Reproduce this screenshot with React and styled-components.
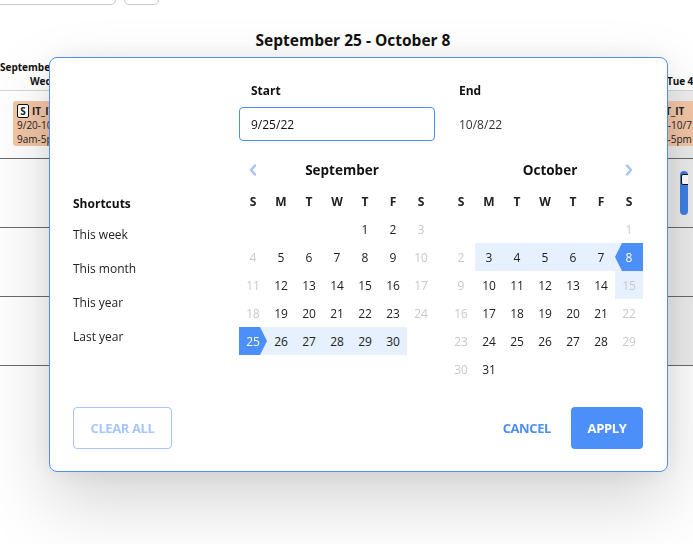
import React from 'react';
import styled, { createGlobalStyle, css } from 'styled-components';

const FONT = '"Open Sans", "Noto Sans", sans-serif';

const GlobalStyle = createGlobalStyle`
  html, body { margin: 0; padding: 0; background: #fff; overflow: hidden; }
  body { font-family: ${FONT}; color: #222; }
  #root { width: 693px; height: 544px; overflow: hidden; position: relative; }
  * { box-sizing: border-box; }
`;

/* ---------- background schedule page ---------- */
const Page = styled.div`
  width: 693px;
  height: 544px;
  overflow: hidden;
`;

const Toolbar = styled.div`
  display: flex;
  gap: 8px;
  height: 32px;
  margin-top: -27px;
  margin-left: -20px;
`;

const SearchBox = styled.div`
  width: 136px;
  border: 1px solid #c8c8c8;
  border-radius: 5px;
`;

const ToolButton = styled.div`
  width: 35px;
  border: 1px solid #c8c8c8;
  border-radius: 5px;
`;

const Title = styled.h1`
  margin: 24px 0 0;
  padding-left: 13px;
  text-align: center;
  font-size: 15.5px;
  line-height: 22px;
  font-weight: 700;
  color: #111;
`;

const MonthLabel = styled.div`
  margin-top: 9px;
  font-size: 10px;
  line-height: 14px;
  font-weight: 700;
  color: #111;
  white-space: nowrap;
`;

const ScheduleRow = styled.div`
  display: grid;
  grid-template-columns: 96px 536px 61px;
  height: ${p => p.$h}px;
  border-bottom: 1px solid ${p => (p.$light ? '#d4d4d4' : '#6a6a6a')};
`;

const DayName = styled.div`
  font-size: 10px;
  line-height: 14px;
  font-weight: 700;
  color: #111;
  white-space: nowrap;
  letter-spacing: -0.1px;
  padding-left: ${p => p.$pl}px;
`;

const Cell = styled.div`
  position: relative;
  min-width: 0;
  overflow: hidden;
  background: ${p => (p.$shade ? '#ededed' : 'transparent')};
`;

const EventCard = styled.div`
  margin: 10px 0 0 ${p => p.$ml}px;
  width: 82px;
  height: 45px;
  padding: 3px 4px 0;
  background: #f3c6a6;
  border-radius: 3px;
  font-size: 10px;
  line-height: 14px;
  color: #222;
  white-space: nowrap;
  overflow: hidden;
`;

const EventTitle = styled.div`
  display: flex;
  align-items: center;
  gap: 3px;
  font-weight: 700;
`;

const TypeBox = styled.span`
  display: inline-flex;
  align-items: center;
  justify-content: center;
  width: 12px;
  height: 14px;
  border: 1.5px solid #111;
  border-radius: 2px;
  font-size: 10px;
  font-weight: 700;
  line-height: 1;
  background: #fff;
`;

const Pill = styled.div`
  margin: 12px 0 0 48px;
  width: 8px;
  height: 44px;
  border-radius: 4px;
  background: #3f80e4;
  overflow: hidden;
  padding: 3px 0 0 1px;
`;

const PillMark = styled.div`
  width: 10px;
  height: 11px;
  border: 1.5px solid #111;
  border-radius: 2px;
  background: #fff;
`;

/* ---------- dialog ---------- */
const Dialog = styled.div`
  position: fixed;
  left: 49px;
  top: 57px;
  width: 619px;
  height: 415px;
  background: #fff;
  border: 1px solid #4d8ef7;
  border-radius: 8px;
  box-shadow: 0 30px 70px rgba(0, 0, 0, 0.17), 0 0 26px rgba(0, 0, 0, 0.07);
  padding: 24px 24px 21px 23px;
  display: flex;
  flex-direction: column;
`;

const Body = styled.div`
  display: flex;
`;

const Shortcuts = styled.div`
  width: 166px;
  flex: none;
  padding-top: 113px;
  display: flex;
  flex-direction: column;
  gap: 16px;
`;

const ShortcutsHeading = styled.div`
  font-size: 12px;
  line-height: 18px;
  font-weight: 700;
  color: #111;
  margin-bottom: -3px;
`;

const ShortcutItem = styled.div`
  font-size: 12px;
  line-height: 18px;
  color: #222;
`;

const Main = styled.div`
  width: 404px;
  flex: none;
`;

const Pair = styled.div`
  display: grid;
  grid-template-columns: 196px 196px;
  column-gap: 12px;
`;

const Field = styled.div`
  display: flex;
  flex-direction: column;
  gap: 7px;
`;

const FieldLabel = styled.label`
  padding-left: 12px;
  font-size: 12px;
  line-height: 18px;
  font-weight: 700;
  color: #111;
`;

const DateInput = styled.input`
  height: 34px;
  width: 100%;
  padding: 0 11px;
  border: 1px solid ${p => (p.$active ? '#4d8ef7' : 'transparent')};
  border-radius: 4px;
  outline: none;
  font-family: ${FONT};
  font-size: 12px;
  color: ${p => (p.$active ? '#111' : '#333')};
  background: #fff;
`;

const Calendars = styled(Pair)`
  margin-top: 15px;
`;

const MonthHeader = styled.div`
  display: flex;
  align-items: center;
  height: 28px;
`;

const NavButton = styled.div`
  width: 28px;
  height: 28px;
  flex: none;
  display: flex;
  align-items: center;
  justify-content: center;
`;

const MonthTitle = styled.div`
  flex: 1;
  padding-left: 10px;
  text-align: center;
  font-size: 13.5px;
  font-weight: 700;
  color: #111;
`;

const Grid = styled.div`
  display: grid;
  grid-template-columns: repeat(7, 28px);
  grid-auto-rows: 28px;
`;

const WeekGrid = styled(Grid)`
  margin-top: 3px;
`;

const Dow = styled.div`
  display: flex;
  align-items: center;
  justify-content: center;
  font-size: 12px;
  font-weight: 700;
  color: #222;
`;

const Day = styled.div`
  position: relative;
  display: flex;
  align-items: center;
  justify-content: center;
  font-size: 12px;
  color: ${p => (p.$edge ? '#fff' : p.$muted ? '#c8c8c8' : '#222')};
  background: ${p => (p.$range || p.$edge ? '#e6f0ff' : 'transparent')};
  ${p =>
    p.$edge &&
    css`
      &::before {
        content: '';
        position: absolute;
        inset: 0;
        background: #4d8ff8;
        clip-path: ${p.$edge === 'start'
          ? 'polygon(0 0, 75% 0, 100% 50%, 75% 100%, 0 100%)'
          : 'polygon(25% 0, 100% 0, 100% 100%, 25% 100%, 0 50%)'};
      }
    `}
  span {
    position: relative;
  }
`;

const Footer = styled.div`
  margin-top: 24px;
  display: flex;
  justify-content: space-between;
  align-items: center;
`;

const BaseButton = styled.button`
  height: 42px;
  border-radius: 4px;
  font-family: ${FONT};
  font-size: 13px;
  font-weight: 700;
  letter-spacing: -0.4px;
  text-transform: uppercase;
  cursor: pointer;
`;

const ClearButton = styled(BaseButton)`
  width: 99px;
  background: #fff;
  border: 1px solid #a8c6fb;
  color: #a8c6fb;
`;

const Actions = styled.div`
  display: flex;
  gap: 8px;
`;

const CancelButton = styled(BaseButton)`
  padding: 0 12px;
  background: transparent;
  border: none;
  color: #4d8ef7;
`;

const ApplyButton = styled(BaseButton)`
  width: 72px;
  background: #4d8ff8;
  border: none;
  color: #fff;
`;

const Chevron = ({ dir }) => (
  <svg width="10" height="12" viewBox="0 0 10 12">
    <path
      d={dir === 'left' ? 'M7 1.5 L3 6 L7 10.5' : 'M3 1.5 L7 6 L3 10.5'}
      fill="none"
      stroke="#a3c4fb"
      strokeWidth="2.4"
      strokeLinecap="round"
      strokeLinejoin="round"
    />
  </svg>
);

const DOW = ['S', 'M', 'T', 'W', 'T', 'F', 'S'];

function buildMonth(lead, days) {
  const cells = [];
  for (let i = 0; i < lead; i++) cells.push(null);
  for (let d = 1; d <= days; d++) cells.push(d);
  return cells;
}

const months = [
  {
    name: 'September',
    nav: 'left',
    cells: buildMonth(4, 30),
    range: [26, 27, 28, 29, 30],
    start: 25,
  },
  {
    name: 'October',
    nav: 'right',
    cells: buildMonth(6, 31),
    range: [3, 4, 5, 6, 7, 15],
    end: 8,
  },
];

function Month({ m }) {
  return (
    <div>
      <MonthHeader>
        <NavButton>{m.nav === 'left' && <Chevron dir="left" />}</NavButton>
        <MonthTitle>{m.name}</MonthTitle>
        <NavButton>{m.nav === 'right' && <Chevron dir="right" />}</NavButton>
      </MonthHeader>
      <WeekGrid>
        {DOW.map((d, i) => (
          <Dow key={i}>{d}</Dow>
        ))}
        {m.cells.map((d, i) => {
          if (d === null) return <Day key={i} />;
          const col = i % 7;
          const edge = d === m.start ? 'start' : d === m.end ? 'end' : undefined;
          return (
            <Day
              key={i}
              $edge={edge}
              $range={m.range.includes(d)}
              $muted={col === 0 || col === 6}
            >
              <span>{d}</span>
            </Day>
          );
        })}
      </WeekGrid>
    </div>
  );
}

const Event = ({ ml }) => (
  <EventCard $ml={ml}>
    <EventTitle>
      <TypeBox>S</TypeBox>IT_IT
    </EventTitle>
    <div>9/20-10/7</div>
    <div>9am-5pm</div>
  </EventCard>
);

export default function App() {
  return (
    <>
      <GlobalStyle />
      <Page>
        <Toolbar>
          <SearchBox />
          <ToolButton />
        </Toolbar>
        <Title>September 25 - October 8</Title>
        <MonthLabel>September</MonthLabel>
        <ScheduleRow $h={17} $light>
          <DayName $pl={30}>Wed 28</DayName>
          <Cell />
          <DayName $pl={35}>Tue 4</DayName>
        </ScheduleRow>
        <ScheduleRow $h={68}>
          <Cell>
            <Event ml={13} />
          </Cell>
          <Cell />
          <Cell $shade>
            <Event ml={11} />
          </Cell>
        </ScheduleRow>
        <ScheduleRow $h={69}>
          <Cell />
          <Cell />
          <Cell $shade>
            <Pill>
              <PillMark />
            </Pill>
          </Cell>
        </ScheduleRow>
        <ScheduleRow $h={69}>
          <Cell />
          <Cell />
          <Cell $shade />
        </ScheduleRow>
        <ScheduleRow $h={69}>
          <Cell />
          <Cell />
          <Cell $shade />
        </ScheduleRow>
      </Page>

      <Dialog>
        <Body>
          <Shortcuts>
            <ShortcutsHeading>Shortcuts</ShortcutsHeading>
            <ShortcutItem>This week</ShortcutItem>
            <ShortcutItem>This month</ShortcutItem>
            <ShortcutItem>This year</ShortcutItem>
            <ShortcutItem>Last year</ShortcutItem>
          </Shortcuts>
          <Main>
            <Pair>
              <Field>
                <FieldLabel>Start</FieldLabel>
                <DateInput $active defaultValue="9/25/22" />
              </Field>
              <Field>
                <FieldLabel>End</FieldLabel>
                <DateInput defaultValue="10/8/22" />
              </Field>
            </Pair>
            <Calendars>
              {months.map(m => (
                <Month key={m.name} m={m} />
              ))}
            </Calendars>
          </Main>
        </Body>
        <Footer>
          <ClearButton>Clear all</ClearButton>
          <Actions>
            <CancelButton>Cancel</CancelButton>
            <ApplyButton>Apply</ApplyButton>
          </Actions>
        </Footer>
      </Dialog>
    </>
  );
}
